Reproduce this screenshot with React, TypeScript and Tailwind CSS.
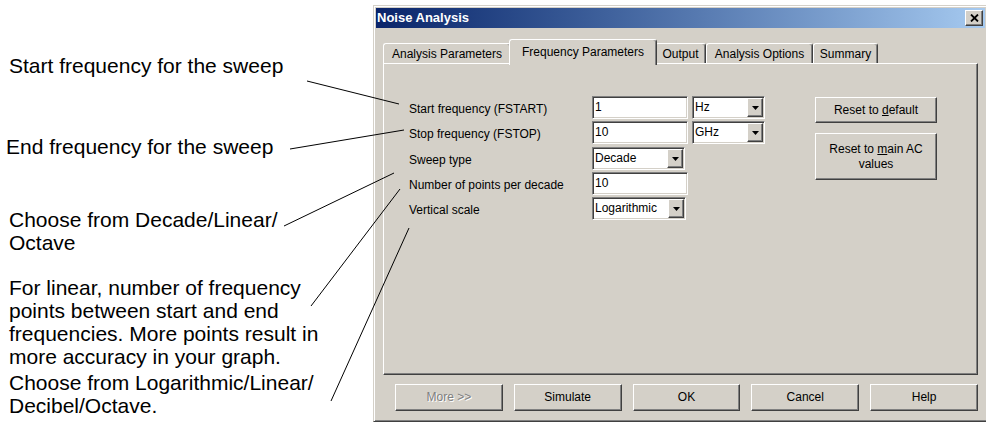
import React from 'react';

const raised =
  'border border-t-white border-l-white border-r-[#404040] border-b-[#404040] shadow-[inset_-1px_-1px_0_#808080]';
const sunken =
  'border border-t-[#808080] border-l-[#808080] border-r-white border-b-white shadow-[inset_1px_1px_0_#404040,inset_-1px_-1px_0_#d4d0c8]';

const DownArrow = () => (
  <svg width="7" height="4" viewBox="0 0 7 4">
    <path d="M0 0h7L3.5 4z" fill="#000" />
  </svg>
);

const Field = ({ value }: { value: string }) => (
  <div className={`w-[96px] h-[23px] bg-white pl-[2px] leading-[21px] ${sunken}`}>{value}</div>
);

const Combo = ({ value, className }: { value: string; className: string }) => (
  <div className={`h-[23px] bg-white flex p-px ${sunken} ${className}`}>
    <span className="flex-1 pl-[1px] leading-[19px]">{value}</span>
    <span className={`w-[16px] bg-[#d4d0c8] flex items-center justify-center ${raised}`}>
      <DownArrow />
    </span>
  </div>
);

const Button = ({
  children,
  className,
  disabled,
}: {
  children: React.ReactNode;
  className: string;
  disabled?: boolean;
}) => (
  <div
    className={`bg-[#d4d0c8] flex items-center justify-center text-center leading-[15px] ${raised} ${className} ${
      disabled ? 'text-[#808080] [text-shadow:1px_1px_0_#fff]' : 'text-black'
    }`}
  >
    <span>{children}</span>
  </div>
);

const tabs = [
  { label: 'Analysis Parameters', w: 'w-[128px]' },
  { label: 'Frequency Parameters', w: 'w-[148px]', active: true },
  { label: 'Output', w: 'w-[51px]' },
  { label: 'Analysis Options', w: 'w-[107px]' },
  { label: 'Summary', w: 'w-[65px]' },
];

const Row = ({ label, className, children }: { label: string; className?: string; children: React.ReactNode }) => (
  <div className={`flex items-center h-[23px] ${className ?? ''}`}>
    <span className="w-[183px] pt-[3px]">{label}</span>
    {children}
  </div>
);

const Dialog = () => (
  <div className="mt-[5px] w-[615px] h-[417px] shrink-0 bg-[#d4d0c8] border border-t-[#d4d0c8] border-l-[#d4d0c8] border-r-[#404040] border-b-[#404040] shadow-[inset_1px_1px_0_#fff,inset_-1px_-1px_0_#808080] p-[2px] flex flex-col text-[12px] text-black">
    {/* title bar */}
    <div className="h-[20px] bg-linear-to-r from-[#0a246a] to-[#a6caf0] flex items-center justify-between pl-[1px] pr-[2px]">
      <span className="text-white font-bold text-[13px]">Noise Analysis</span>
      <span className={`w-[18px] h-[16px] bg-[#d4d0c8] flex items-center justify-center ${raised}`}>
        <svg width="9" height="8" viewBox="0 0 9 8">
          <path d="M1 0.5l7 7M8 0.5l-7 7" stroke="#000" strokeWidth="1.8" />
        </svg>
      </span>
    </div>

    <div className="px-[7px] pt-[11px] flex flex-col">
      {/* tabs */}
      <div className="h-[24px] flex items-end">
        {tabs.map((t) =>
          t.active ? (
            <div
              key={t.label}
              className={`relative z-10 -mx-[2px] -mb-[2px] h-[26px] bg-[#d4d0c8] rounded-t-[3px] border-t border-l border-r border-t-white border-l-white border-r-[#404040] shadow-[inset_-1px_0_0_#808080] flex items-center justify-center pb-[2px] ${t.w}`}
            >
              {t.label}
            </div>
          ) : (
            <div
              key={t.label}
              className={`h-[20px] rounded-t-[3px] border-t border-l border-r border-t-white border-l-white border-r-[#404040] shadow-[inset_-1px_0_0_#808080] flex items-center justify-center pt-[1px] ${t.w}`}
            >
              {t.label}
            </div>
          )
        )}
      </div>

      {/* panel */}
      <div className={`h-[312px] pl-[25px] pt-[32px] flex ${raised}`}>
        <div className="flex flex-col">
          <Row label="Start frequency (FSTART)">
            <Field value="1" />
            <Combo value="Hz" className="w-[73px] ml-[4px]" />
          </Row>
          <Row label="Stop frequency (FSTOP)" className="mt-[2px]">
            <Field value="10" />
            <Combo value="GHz" className="w-[73px] ml-[4px]" />
          </Row>
          <Row label="Sweep type" className="mt-[3px]">
            <Combo value="Decade" className="w-[93px]" />
          </Row>
          <Row label="Number of points per decade" className="mt-[2px]">
            <Field value="10" />
          </Row>
          <Row label="Vertical scale" className="mt-[2px]">
            <Combo value="Logarithmic" className="w-[94px]" />
          </Row>
        </div>
        <div className="ml-[50px] mt-[1px] flex flex-col">
          <Button className="w-[122px] h-[26px]">
            Reset to <span className="underline">d</span>efault
          </Button>
          <Button className="w-[122px] h-[47px] mt-[10px]">
            Reset to <span className="underline">m</span>ain AC
            <br />
            values
          </Button>
        </div>
      </div>

      {/* bottom buttons */}
      <div className="mt-[9px] pl-[12px] flex gap-[11px]">
        <Button className="w-[108px] h-[27px]" disabled>
          More &gt;&gt;
        </Button>
        <Button className="w-[108px] h-[27px]">Simulate</Button>
        <Button className="w-[108px] h-[27px]">OK</Button>
        <Button className="w-[108px] h-[27px]">Cancel</Button>
        <Button className="w-[108px] h-[27px]">Help</Button>
      </div>
    </div>
  </div>
);

export default function App() {
  return (
    <div className="relative w-[986px] h-[447px] overflow-hidden bg-white flex font-['Liberation_Sans',Arial,sans-serif]">
      {/* callout texts */}
      <div className="w-[373px] shrink-0 pt-[54px] text-[21px] leading-[23px] text-black">
        <p className="pl-[9px]">Start frequency for the sweep</p>
        <p className="mt-[58px] pl-[6px]">End frequency for the sweep</p>
        <p className="mt-[50px] pl-[9px]">
          Choose from Decade/Linear/
          <br />
          Octave
        </p>
        <p className="mt-[22px] pl-[9px]">
          For linear, number of frequency
          <br />
          points between start and end
          <br />
          frequencies. More points result in
          <br />
          more accuracy in your graph.
        </p>
        <p className="mt-[3px] pl-[9px]">
          Choose from Logarithmic/Linear/
          <br />
          Decibel/Octave.
        </p>
      </div>

      <Dialog />

      {/* leader lines */}
      <svg className="absolute left-0 top-0 pointer-events-none" width="986" height="447">
        <g stroke="#000" strokeWidth="1">
          <line x1="307" y1="81" x2="399" y2="104" />
          <line x1="290" y1="149" x2="404" y2="130" />
          <line x1="284" y1="226" x2="394" y2="173" />
          <line x1="400" y1="189" x2="311" y2="306" />
          <line x1="409" y1="228" x2="331" y2="401" />
        </g>
      </svg>
    </div>
  );
}
